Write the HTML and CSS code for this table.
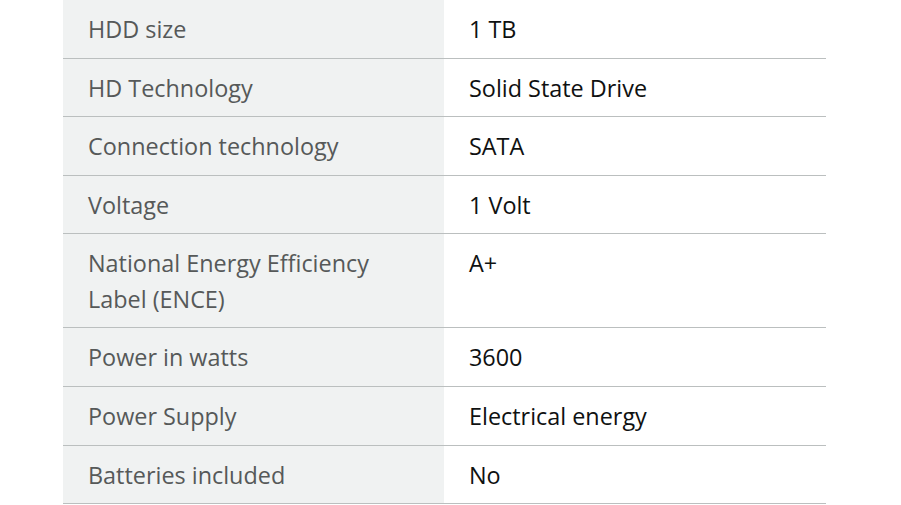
FILE: index.html
```html
<!DOCTYPE html>
<html>
<head>
<meta charset="utf-8">
<link rel="stylesheet" href="styles.css">
</head>
<body>
<table class="specs">
  <tbody>
    <tr><th>HDD size</th><td>1 TB</td></tr>
    <tr><th>HD Technology</th><td>Solid State Drive</td></tr>
    <tr><th>Connection technology</th><td>SATA</td></tr>
    <tr><th>Voltage</th><td>1 Volt</td></tr>
    <tr><th>National Energy Efficiency Label (ENCE)</th><td>A+</td></tr>
    <tr><th>Power in watts</th><td>3600</td></tr>
    <tr><th>Power Supply</th><td>Electrical energy</td></tr>
    <tr><th>Batteries included</th><td>No</td></tr>
  </tbody>
</table>
</body>
</html>
```
FILE: styles.css
```css
html, body {
  margin: 0;
  padding: 0;
  background: #ffffff;
}
body {
  padding-left: 63px;
  font-family: "Open Sans", "Noto Sans", Arial, sans-serif;
}
.specs {
  border-collapse: collapse;
  width: 763px;
  table-layout: fixed;
}
.specs tr {
  border-bottom: 1px solid #bbbfbf;
}
.specs th,
.specs td {
  text-align: left;
  vertical-align: top;
  font-size: 23.4px;
  line-height: 35.4px;
  padding: 12.1px 26px 10.1px 25px;
  font-weight: 400;
}
.specs th {
  width: 330px;
  background: #f0f2f2;
  color: #565959;
}
.specs td {
  color: #0f1111;
}
```
